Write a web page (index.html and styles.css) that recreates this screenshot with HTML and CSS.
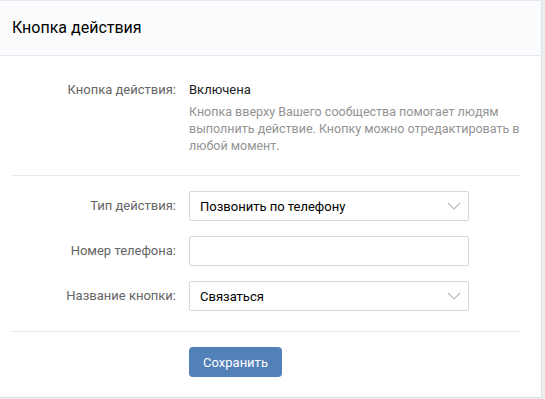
FILE: index.html
```html
<!DOCTYPE html>
<html lang="ru">

<head>
    <meta charset="UTF-8">
    <meta name="viewport" content="width=device-width, initial-scale=1.0">
    <title>Кнопка действия</title>
    <link rel="stylesheet" href="styles.css">
</head>

<body>
    <div class="page-block">
        <div class="block-header">Кнопка действия</div>

        <div class="block-section">
            <div class="form-row form-row-text">
                <div class="form-label">Кнопка действия:</div>
                <div class="form-value">
                    <div class="status">Включена</div>
                    <div class="hint">Кнопка вверху Вашего сообщества помогает людям выполнить действие. Кнопку можно отредактировать в любой момент.</div>
                </div>
            </div>
        </div>

        <div class="block-section form-fields">
            <div class="form-row">
                <label class="form-label" for="actionType">Тип действия:</label>
                <div class="dropdown" id="actionType">
                    <span>Позвонить по телефону</span>
                    <svg class="chevron" width="14" height="8" viewBox="0 0 14 8"><path d="M1 1l6 6 6-6" fill="none" stroke="#b5bcc4" stroke-width="1.2"/></svg>
                </div>
            </div>
            <div class="form-row">
                <label class="form-label" for="phone">Номер телефона:</label>
                <input type="text" class="text-input" id="phone">
            </div>
            <div class="form-row">
                <label class="form-label" for="buttonName">Название кнопки:</label>
                <div class="dropdown" id="buttonName">
                    <span>Связаться</span>
                    <svg class="chevron" width="14" height="8" viewBox="0 0 14 8"><path d="M1 1l6 6 6-6" fill="none" stroke="#b5bcc4" stroke-width="1.2"/></svg>
                </div>
            </div>
        </div>

        <div class="block-footer">
            <button class="save-button">Сохранить</button>
        </div>
    </div>
</body>

</html>
```

FILE: styles.css
```css
body {
    font-family: Roboto, "Open Sans", Arial, sans-serif;
    font-size: 12.5px;
    background-color: #edeef0;
    margin: 0;
    color: #000;
}

.page-block {
    width: 541px;
    background: white;
    border: 1px solid #dce1e6;
    border-left: none;
    border-top-color: #e7e8ec;
}

.block-header {
    background: #fafbfc;
    border-bottom: 1px solid #e7e8ec;
    height: 54px;
    line-height: 53px;
    padding-left: 12px;
    font-size: 16px;
    color: #000;
}

.block-section {
    margin: 0 20px 0 12px;
    padding: 25px 0 21px;
    border-bottom: 1px solid #e7e8ec;
}

.form-fields {
    padding: 15px 0 20px;
    display: flex;
    flex-direction: column;
    gap: 15px;
}

.form-row {
    display: grid;
    grid-template-columns: 164px 280px;
    column-gap: 13px;
    align-items: center;
}

.form-row-text {
    grid-template-columns: 164px 332px;
    align-items: start;
}

.form-label {
    text-align: right;
    color: #656565;
    font-size: 13px;
    line-height: 18px;
}

.status {
    line-height: 18px;
    font-size: 13px;
    color: #222;
}

.hint {
    margin-top: 4px;
    line-height: 17px;
    color: #939393;
}

.dropdown,
.text-input {
    height: 30px;
    box-sizing: border-box;
    border: 1px solid #d3d9de;
    border-radius: 2px;
    background: white;
    font-family: inherit;
    font-size: 13px;
}

.dropdown {
    display: flex;
    align-items: center;
    justify-content: space-between;
    padding: 0 6px 0 10px;
    color: #000;
}

.chevron {
    margin-right: 1px;
}

.text-input {
    width: 100%;
    padding: 0 10px;
    outline: none;
}

.block-footer {
    padding: 15px 0 20px 189px;
}

.save-button {
    display: block;
    background: #5181b8;
    color: white;
    border: none;
    border-radius: 4px;
    height: 30px;
    width: 93px;
    font-family: inherit;
    font-size: 13px;
    font-weight: 400;
    cursor: pointer;
}

.save-button:hover {
    background: #5b88bd;
}
```
